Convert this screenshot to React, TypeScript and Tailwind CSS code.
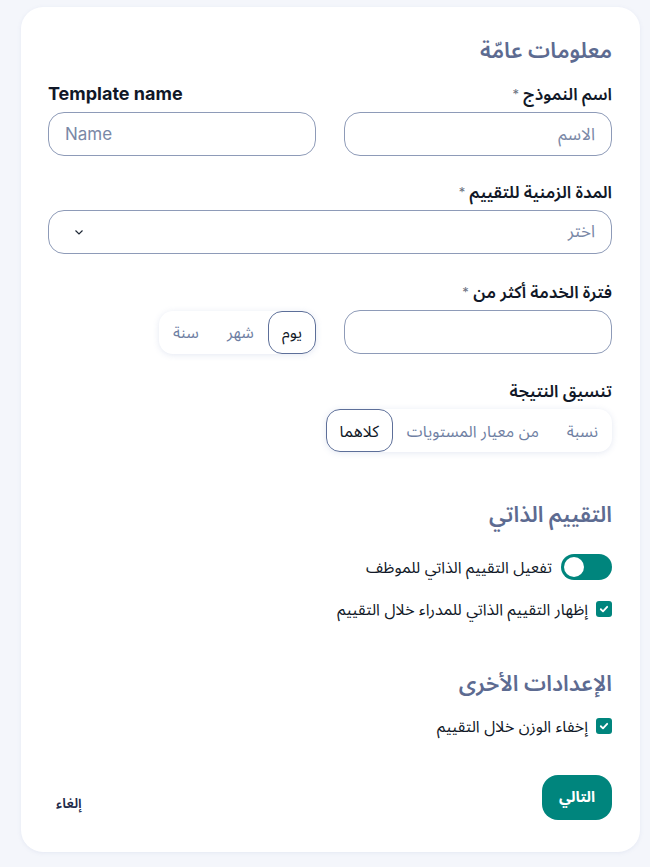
import { useState } from 'react'

const labelCls = 'text-[17px] leading-[22px] font-semibold text-[#111827]'
const inputCls =
  'h-[44px] w-full rounded-[16px] border border-[#8e9bb8] bg-white px-4 text-[17px] text-[#1f2937] placeholder:text-[#7a88a6] outline-none'
const headingCls = 'text-[22px] font-semibold text-[#5d6b91] leading-[26px]'

function Req({ children }: { children: React.ReactNode }) {
  return (
    <label className={labelCls}>
      {children} <span className="text-[#6b7280] text-[13px] font-normal align-top">*</span>
    </label>
  )
}

function Segmented({
  options,
  value,
  onChange,
}: {
  options: string[]
  value: string
  onChange: (v: string) => void
}) {
  return (
    <div className="flex h-[43px] items-center rounded-[14px] bg-white shadow-[0_1px_6px_rgba(120,140,190,0.2)]">
      {options.map((o) => (
        <button
          key={o}
          type="button"
          onClick={() => onChange(o)}
          className={`h-[43px] rounded-[14px] px-[13px] text-[16px] ${
            value === o ? 'border border-[#5d6f99] text-[#111827]' : 'border border-transparent text-[#6f7fa3]'
          }`}
        >
          {o}
        </button>
      ))}
    </div>
  )
}

function Check({ label }: { label: string }) {
  const [on, setOn] = useState(true)
  return (
    <label className="flex items-center gap-2 text-[16px] text-[#111827] cursor-pointer">
      <span
        onClick={() => setOn(!on)}
        className={`flex h-[16px] w-[16px] items-center justify-center rounded-[3px] ${on ? 'bg-[#00857d]' : 'border border-[#8e9bb8]'}`}
      >
        {on && (
          <svg viewBox="0 0 12 12" className="h-[10px] w-[10px]">
            <path d="M2.2 6.3 L4.8 8.8 L9.8 3.4" fill="none" stroke="white" strokeWidth="2.2" strokeLinecap="round" strokeLinejoin="round" />
          </svg>
        )}
      </span>
      {label}
    </label>
  )
}

export default function App() {
  const [period, setPeriod] = useState('يوم')
  const [format, setFormat] = useState('كلاهما')
  const [selfEval, setSelfEval] = useState(true)

  return (
    <div className="min-h-[867px] bg-[#f4f6fb] pl-[21px] pr-[10px] pt-[7px] pb-[16px] font-['Inter','Noto_Sans','Noto_Sans_Arabic','DejaVu_Sans',sans-serif]">
      <div dir="rtl" className="rounded-[22px] bg-white px-[28px] pl-[27px] pt-[30px] pb-[32px] shadow-[0_1px_4px_rgba(120,140,190,0.12)]">
        <h2 className={headingCls}>معلومات عامّة</h2>

        <div className="mt-[20px] grid grid-cols-2 gap-[28px]">
          <div className="flex flex-col gap-[7px]">
            <Req>اسم النموذج</Req>
            <input className={inputCls} placeholder="الاسم" />
          </div>
          <div dir="ltr" className="flex flex-col gap-[7px]">
            <label className="text-[18px] leading-[22px] font-bold text-[#111827]">Template name</label>
            <input className={inputCls} placeholder="Name" />
          </div>
        </div>

        <div className="mt-[25px] flex flex-col gap-[7px]">
          <Req>المدة الزمنية للتقييم</Req>
          <div className="flex h-[44px] items-center justify-between rounded-[16px] border border-[#8e9bb8] px-4 pl-[24px]">
            <span className="text-[17px] text-[#7a88a6]">اختر</span>
            <svg viewBox="0 0 12 12" className="h-[12px] w-[12px]">
              <path d="M2.5 4.5 L6 8 L9.5 4.5" fill="none" stroke="#1f2937" strokeWidth="1.2" />
            </svg>
          </div>
        </div>

        <div className="mt-[27px] flex flex-col gap-[7px]">
          <Req>فترة الخدمة أكثر من</Req>
          <div className="grid grid-cols-2 items-center gap-[28px]">
            <input className={inputCls} />
            <div className="flex">
              <Segmented options={['يوم', 'شهر', 'سنة']} value={period} onChange={setPeriod} />
            </div>
          </div>
        </div>

        <div className="mt-[26px] flex flex-col gap-[7px]">
          <label className={labelCls}>تنسيق النتيجة</label>
          <div className="flex">
            <Segmented options={['نسبة', 'من معيار المستويات', 'كلاهما']} value={format} onChange={setFormat} />
          </div>
        </div>

        <h2 className={`mt-[49px] ${headingCls}`}>التقييم الذاتي</h2>

        <div className="mt-[27px] flex flex-col gap-[17px]">
          <label className="flex items-center gap-[9px] text-[16px] text-[#111827]">
            <button
              type="button"
              onClick={() => setSelfEval(!selfEval)}
              className={`flex h-[26px] w-[51px] items-center rounded-full px-[3px] ${selfEval ? 'bg-[#00857d] justify-end' : 'bg-[#c5cddd] justify-start'}`}
            >
              <span className="h-[20px] w-[20px] rounded-full bg-white" />
            </button>
            تفعيل التقييم الذاتي للموظف
          </label>
          <Check label="إظهار التقييم الذاتي للمدراء خلال التقييم" />
        </div>

        <h2 className={`mt-[49px] ${headingCls}`}>الإعدادات الأخرى</h2>

        <div className="mt-[18px]">
          <Check label="إخفاء الوزن خلال التقييم" />
        </div>

        <div className="mt-[37px] flex items-center justify-between">
          <button type="button" className="h-[45px] rounded-[16px] bg-[#00857d] px-[17px] text-[15px] font-bold text-white">
            التالي
          </button>
          <button type="button" className="ml-[8px] mt-[10px] text-[14px] font-semibold text-[#1e2a4a]">
            إلغاء
          </button>
        </div>
      </div>
    </div>
  )
}
